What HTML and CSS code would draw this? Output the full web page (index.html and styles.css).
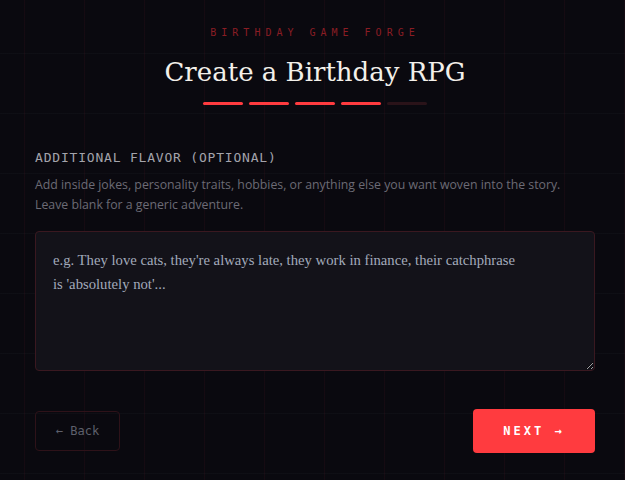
FILE: index.html
```html
<!DOCTYPE html>
<html lang="en">
<head>
<meta charset="utf-8">
<title>Create a Birthday RPG</title>
<link rel="stylesheet" href="styles.css">
</head>
<body>
<main class="page">
  <header class="head">
    <div class="eyebrow">BIRTHDAY GAME FORGE</div>
    <h1 class="title">Create a Birthday RPG</h1>
    <div class="progress">
      <span class="seg on"></span>
      <span class="seg on"></span>
      <span class="seg on"></span>
      <span class="seg on"></span>
      <span class="seg"></span>
    </div>
  </header>
  <section class="field">
    <label class="label" for="flavor">ADDITIONAL FLAVOR (OPTIONAL)</label>
    <p class="hint">Add inside jokes, personality traits, hobbies, or anything else you want woven into the story. Leave blank for a generic adventure.</p>
    <textarea id="flavor" class="input" placeholder="e.g. They love cats, they're always late, they work in finance, their catchphrase is 'absolutely not'..."></textarea>
  </section>
  <nav class="actions">
    <button class="btn back">← Back</button>
    <button class="btn next">NEXT →</button>
  </nav>
</main>
</body>
</html>
```
FILE: styles.css
```css
html, body {
  margin: 0;
  padding: 0;
}
body {
  background-color: #0a090f;
  background-image:
    linear-gradient(to right, rgba(140, 30, 45, 0.09) 1px, transparent 1px),
    linear-gradient(to bottom, rgba(110, 110, 130, 0.05) 1px, transparent 1px);
  background-size: 60px 60px;
  background-position: 24px 53px;
  min-height: 480px;
  font-family: "Open Sans", sans-serif;
}
.page {
  padding: 26px 30px 0 35px;
  display: flex;
  flex-direction: column;
}
.head {
  display: flex;
  flex-direction: column;
  align-items: center;
}
.eyebrow {
  font-family: "DejaVu Sans Mono", monospace;
  font-size: 10px;
  letter-spacing: 5px;
  color: #8a1d24;
  line-height: 14px;
}
.title {
  margin: 15px 0 0;
  font-family: "DejaVu Serif", serif;
  font-weight: normal;
  font-size: 26px;
  line-height: 34px;
  color: #f3f0ea;
}
.progress {
  display: flex;
  gap: 6px;
  margin-top: 13px;
}
.seg {
  width: 40px;
  height: 3px;
  border-radius: 2px;
  background: #2a1319;
}
.seg.on {
  background: #ff3b3f;
}
.field {
  margin-top: 44px;
  display: flex;
  flex-direction: column;
}
.label {
  font-family: "DejaVu Sans Mono", monospace;
  font-size: 13px;
  letter-spacing: 0.8px;
  color: #a3a3ab;
  line-height: 18px;
}
.hint {
  margin: 8px 0 0;
  font-size: 12.3px;
  line-height: 20px;
  color: #6c6b75;
}
.input {
  margin-top: 16px;
  height: 140px;
  box-sizing: border-box;
  background: #131219;
  border: 1px solid #3a1820;
  border-radius: 4px;
  padding: 16px 70px 16px 17px;
  font-family: "Liberation Serif", serif;
  font-size: 14.7px;
  line-height: 24px;
  color: #e0e0e8;
  outline: none;
  resize: vertical;
}
.input::placeholder {
  color: #a2aabb;
  opacity: 1;
}
.actions {
  margin-top: 38px;
  display: flex;
  justify-content: space-between;
  align-items: center;
}
.btn {
  font-family: "DejaVu Sans Mono", monospace;
  border-radius: 4px;
  cursor: pointer;
}
.back {
  width: 85px;
  height: 40px;
  background: transparent;
  border: 1px solid #2e1219;
  color: #5e606c;
  font-size: 12px;
}
.next {
  width: 122px;
  height: 44px;
  background: #ff3b3f;
  border: none;
  color: #ffffff;
  font-size: 12px;
  font-weight: bold;
  letter-spacing: 3px;
  padding-left: 6px;
}
```
